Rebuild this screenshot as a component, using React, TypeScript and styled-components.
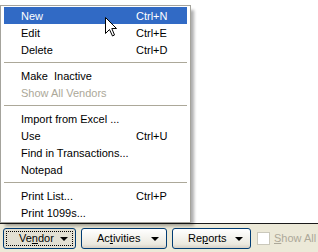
import React from 'react';
import styled, { createGlobalStyle } from 'styled-components';

const GlobalStyle = createGlobalStyle`
  html, body {
    margin: 0;
    padding: 0;
    background: #ffffff;
    overflow: hidden;
  }
  body {
    font-family: 'Liberation Sans', Arial, sans-serif;
    font-size: 11px;
  }
`;

const Window = styled.div`
  width: 318px;
  height: 252px;
  display: flex;
  flex-direction: column;
  position: relative;
  overflow: hidden;
`;

const ListArea = styled.div`
  flex: 1;
  background: #ffffff;
  border-bottom: 1px solid #1a1a1a;
`;

const PopupMenu = styled.div`
  position: absolute;
  left: 0;
  top: 5px;
  width: 183px;
  padding: 1px 3px 1px 3px;
  background: #ffffff;
  border: 1px solid #a4a39c;
  box-shadow: 4px 4px 3px -1px rgba(0, 0, 0, 0.32);
  z-index: 2;
`;

interface IMenuItemProps {
  active?: boolean;
  disabled?: boolean;
}
const MenuItem = styled.div<IMenuItemProps>`
  display: grid;
  grid-template-columns: 115px auto;
  align-items: center;
  height: 17px;
  padding-left: 17px;
  background: ${(props) => (props.active ? '#316ac5' : 'transparent')};
  color: ${(props) => (props.active ? '#ffffff' : props.disabled ? '#aca899' : '#000000')};
  white-space: pre;
`;

const Separator = styled.div`
  height: 9px;
  display: flex;
  align-items: center;
  &::after {
    content: '';
    display: block;
    width: 100%;
    height: 1px;
    background: #aca899;
  }
`;

const Cursor = styled.svg`
  position: absolute;
  left: 105px;
  top: 17px;
  z-index: 3;
`;

const Toolbar = styled.div`
  height: 28px;
  background: #ece9d8;
  display: flex;
  align-items: center;
  gap: 5px;
  padding: 0 3px;
  white-space: nowrap;
`;

interface IDropButtonProps {
  width: number;
  pressed?: boolean;
}
const DropButton = styled.div<IDropButtonProps>`
  flex: none;
  width: ${(props) => props.width}px;
  height: 21px;
  box-sizing: border-box;
  border: 1px solid #003c74;
  border-radius: 3px;
  display: flex;
  align-items: center;
  justify-content: space-between;
  padding: 0 7px 0 15px;
  position: relative;
  color: #000000;
  background: ${(props) =>
    props.pressed
      ? '#e3e0d3'
      : 'linear-gradient(to bottom, #ffffff 0%, #f4f3ee 45%, #ebe9df 80%, #d6d0c5 100%)'};
  ${(props) =>
    props.pressed
      ? `&::before {
    content: '';
    position: absolute;
    inset: 2px;
    border: 1px dotted #000000;
  }`
      : ''}
`;

const Arrow = styled.span`
  width: 0;
  height: 0;
  border-left: 4px solid transparent;
  border-right: 4px solid transparent;
  border-top: 4px solid #000000;
  margin-top: 1px;
`;

const Mnemonic = styled.span`
  text-decoration: underline;
`;

const CheckRow = styled.div`
  flex: none;
  display: flex;
  align-items: center;
  gap: 4px;
  color: #aca899;
  margin-left: 1px;
`;

const CheckBox = styled.span`
  width: 11px;
  height: 11px;
  border: 1px solid #cac8bb;
  background: #ffffff;
`;

const items: Array<{ label: string; shortcut?: string; disabled?: boolean; sep?: boolean; active?: boolean }> = [
  { label: 'New', shortcut: 'Ctrl+N', active: true },
  { label: 'Edit', shortcut: 'Ctrl+E' },
  { label: 'Delete', shortcut: 'Ctrl+D' },
  { label: '', sep: true },
  { label: 'Make  Inactive' },
  { label: 'Show All Vendors', disabled: true },
  { label: '', sep: true },
  { label: 'Import from Excel ...' },
  { label: 'Use', shortcut: 'Ctrl+U' },
  { label: 'Find in Transactions...' },
  { label: 'Notepad' },
  { label: '', sep: true },
  { label: 'Print List...', shortcut: 'Ctrl+P' },
  { label: 'Print 1099s...' },
];

export default function App() {
  return (
    <Window>
      <GlobalStyle />
      <ListArea />
      <PopupMenu>
        {items.map((item, i) =>
          item.sep ? (
            <Separator key={i} />
          ) : (
            <MenuItem key={i} active={item.active} disabled={item.disabled}>
              <span>{item.label}</span>
              <span>{item.shortcut ?? ''}</span>
            </MenuItem>
          ),
        )}
      </PopupMenu>
      <Cursor width="13" height="21" viewBox="0 0 13 21">
        <path
          d="M0.5 0.5 L0.5 16.5 L4.5 12.5 L7.5 19 L9.5 18 L6.8 11.5 L11.5 11.5 Z"
          fill="#ffffff"
          stroke="#000000"
          strokeWidth="1"
          strokeLinejoin="miter"
        />
      </Cursor>
      <Toolbar>
        <DropButton width={73} pressed>
          <span>
            Ve<Mnemonic>n</Mnemonic>dor
          </span>
          <Arrow />
        </DropButton>
        <DropButton width={86}>
          <span>
            Ac<Mnemonic>t</Mnemonic>ivities
          </span>
          <Arrow />
        </DropButton>
        <DropButton width={79}>
          <span>
            Re<Mnemonic>p</Mnemonic>orts
          </span>
          <Arrow />
        </DropButton>
        <CheckRow>
          <CheckBox />
          <span>
            <Mnemonic>S</Mnemonic>how All
          </span>
        </CheckRow>
      </Toolbar>
    </Window>
  );
}
